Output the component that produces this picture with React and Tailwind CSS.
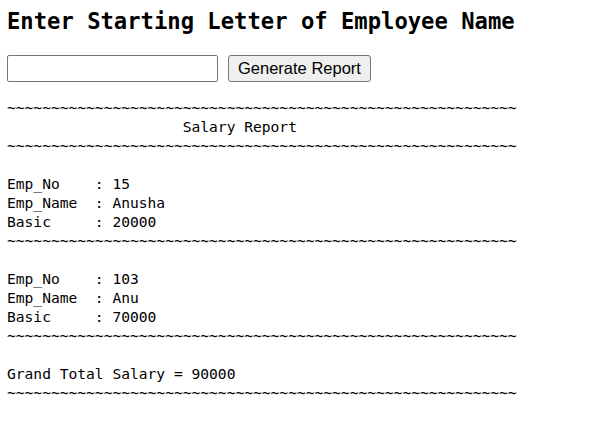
const line = '~'.repeat(58);

const report = [
  line,
  ' '.repeat(20) + 'Salary Report',
  line,
  '',
  'Emp_No    : 15',
  'Emp_Name  : Anusha',
  'Basic     : 20000',
  line,
  '',
  'Emp_No    : 103',
  'Emp_Name  : Anu',
  'Basic     : 70000',
  line,
  '',
  'Grand Total Salary = 90000',
  line,
].join('\n');

export default function App() {
  return (
    <div className="min-h-screen bg-white px-[7px] text-black">
      {/* Heading */}
      <h2 className="pt-[9px] text-[22.2px] leading-[24px] font-bold font-['DejaVu_Sans_Mono',monospace]">
        Enter Starting Letter of Employee Name
      </h2>

      {/* Form */}
      <div className="mt-[22px] flex items-center gap-[10px]">
        <input
          type="text"
          className="w-[211px] h-[27px] border border-[#767676] rounded-[2px] bg-white px-1 outline-none"
        />
        <button className="h-[27px] px-[9px] bg-[#efefef] border border-[#767676] rounded-[3px] text-[16.5px] leading-none text-black font-['Liberation_Sans',sans-serif]">
          Generate Report
        </button>
      </div>

      {/* Report */}
      <pre className="mt-[16px] text-[14.6px] leading-[19px] font-['DejaVu_Sans_Mono',monospace]">
        {report}
      </pre>
    </div>
  );
}
